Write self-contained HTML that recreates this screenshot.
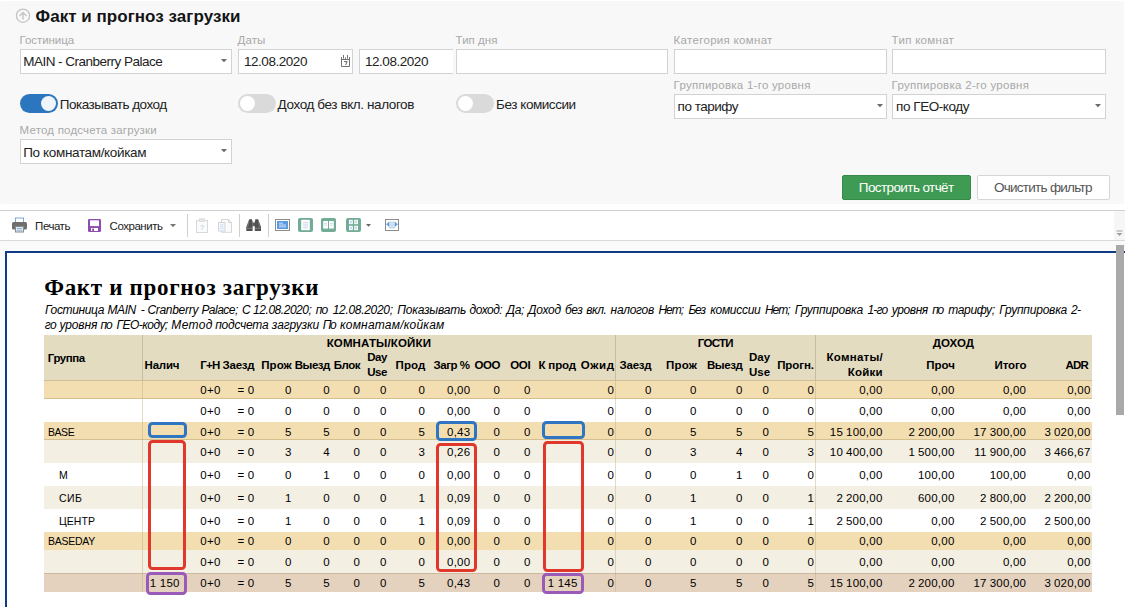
<!DOCTYPE html>
<html><head><meta charset="utf-8"><title>report</title>
<style>
html,body{margin:0;padding:0;}
body{width:1125px;height:607px;position:relative;overflow:hidden;background:#fff;font-family:'Liberation Sans',sans-serif;}
div,span,svg{position:absolute;}
</style></head><body>
<div style="position:absolute;left:0px;top:1px;width:1124px;height:203px;background:#f8f8f8;border-radius:2px;"></div>
<svg style="left:15px;top:8px" width="16" height="16" viewBox="0 0 16 16"><circle cx="8" cy="7.7" r="6.6" fill="none" stroke="#c4c4c4" stroke-width="1.3"/><path d="M8 11.4V4.9M4.5 8L8 4.5l3.5 3.5" fill="none" stroke="#c4c4c4" stroke-width="1.4"/></svg>
<div style="position:absolute;left:20px;top:49px;width:212px;height:25px;background:#fff;border:1px solid #d2d2d2;box-sizing:border-box;"></div>
<svg style="left:221.3px;top:59.099999999999994px" width="6" height="3.4" viewBox="0 0 6 3.4"><path d="M0 0H6L3.0 3.4Z" fill="#6b6b6b"/></svg>
<div style="position:absolute;left:238px;top:49px;width:115px;height:25px;background:#fff;border:1px solid #d2d2d2;box-sizing:border-box;"></div>
<div style="position:absolute;left:359px;top:49px;width:94px;height:25px;background:#fff;border:1px solid #d2d2d2;box-sizing:border-box;border-right:none;"></div>
<div style="position:absolute;left:456px;top:49px;width:212px;height:25px;background:#fff;border:1px solid #d2d2d2;box-sizing:border-box;"></div>
<div style="position:absolute;left:674px;top:49px;width:213px;height:25px;background:#fff;border:1px solid #d2d2d2;box-sizing:border-box;"></div>
<div style="position:absolute;left:892px;top:49px;width:213.5px;height:25px;background:#fff;border:1px solid #d2d2d2;box-sizing:border-box;"></div>
<div style="position:absolute;left:674px;top:94px;width:213px;height:25px;background:#fff;border:1px solid #d2d2d2;box-sizing:border-box;"></div>
<svg style="left:876.5px;top:104.1px" width="6" height="3.4" viewBox="0 0 6 3.4"><path d="M0 0H6L3.0 3.4Z" fill="#6b6b6b"/></svg>
<div style="position:absolute;left:892px;top:94px;width:213.5px;height:25px;background:#fff;border:1px solid #d2d2d2;box-sizing:border-box;"></div>
<svg style="left:1094.5px;top:104.1px" width="6" height="3.4" viewBox="0 0 6 3.4"><path d="M0 0H6L3.0 3.4Z" fill="#6b6b6b"/></svg>
<div style="position:absolute;left:20px;top:139px;width:212px;height:25px;background:#fff;border:1px solid #d2d2d2;box-sizing:border-box;"></div>
<svg style="left:221.3px;top:149.10000000000002px" width="6" height="3.4" viewBox="0 0 6 3.4"><path d="M0 0H6L3.0 3.4Z" fill="#6b6b6b"/></svg>
<svg style="left:341px;top:54px" width="9" height="13" viewBox="0 0 9 13"><path d="M0.5 3V12.5H8.5V3" fill="#fff" stroke="#707070" stroke-width="1"/><path d="M0.5 5.5h8" stroke="#707070" stroke-width="1"/><path d="M2.5 1v3.6M6.5 1v3.6M4.5 3.4v1.6" stroke="#707070" stroke-width="1"/><path d="M3 7.6h3.2L4.6 11" fill="none" stroke="#666" stroke-width="1"/></svg>
<div style="position:absolute;left:20px;top:94px;width:38px;height:19px;background:#2b76bf;border-radius:9.5px;"></div>
<div style="position:absolute;left:40.9px;top:95.9px;width:15.2px;height:15.2px;background:#f0f5fb;border-radius:7.6px;"></div>
<div style="position:absolute;left:238px;top:94px;width:38px;height:19px;background:#dadada;border-radius:9.5px;"></div>
<div style="position:absolute;left:239.7px;top:95.9px;width:15.2px;height:15.2px;background:#fff;border-radius:7.6px;"></div>
<div style="position:absolute;left:456px;top:94px;width:38px;height:19px;background:#dadada;border-radius:9.5px;"></div>
<div style="position:absolute;left:457.7px;top:95.9px;width:15.2px;height:15.2px;background:#fff;border-radius:7.6px;"></div>
<div style="position:absolute;left:842px;top:175px;width:129px;height:25px;background:#3f9a53;border:1px solid #37894a;box-sizing:border-box;border-radius:2px;"></div>
<div style="position:absolute;left:977px;top:175px;width:133px;height:25px;background:#fff;border:1px solid #d6d6d6;box-sizing:border-box;border-radius:2px;"></div>
<div style="position:absolute;left:0px;top:210px;width:1125px;height:1px;background:#d0d0d0;"></div>
<div style="position:absolute;left:0px;top:240px;width:1125px;height:1px;background:#d9d9d9;"></div>
<div style="position:absolute;left:1114px;top:211px;width:11px;height:29px;background:#f6f6f6;"></div>
<svg style="left:1116px;top:230px" width="7" height="7" viewBox="0 0 7 7"><path d="M0.5 1h6" stroke="#9aa0aa" stroke-width="1"/><path d="M0.5 3h6L3.5 6Z" fill="#9aa0aa"/></svg>
<div style="position:absolute;left:187px;top:214px;width:1px;height:23px;background:#cfcfcf;"></div>
<div style="position:absolute;left:239px;top:214px;width:1px;height:23px;background:#cfcfcf;"></div>
<div style="position:absolute;left:268px;top:214px;width:1px;height:23px;background:#cfcfcf;"></div>
<svg style="left:169.8px;top:224.0px" width="6" height="3.2" viewBox="0 0 6 3.2"><path d="M0 0H6L3.0 3.2Z" fill="#777"/></svg>
<svg style="left:366.0px;top:224.0px" width="5" height="2.8" viewBox="0 0 5 2.8"><path d="M0 0H5L2.5 2.8Z" fill="#666"/></svg>
<svg style="left:11px;top:217px" width="17" height="16" viewBox="0 0 17 16">
<rect x="4.5" y="1" width="8" height="5" fill="#fff" stroke="#7aa7d6" stroke-width="1"/>
<rect x="1" y="5" width="15" height="7.5" rx="1.5" fill="#6e6e6e"/>
<rect x="4.5" y="9.5" width="8" height="5.5" fill="#dfe9f5" stroke="#8a8a8a" stroke-width="1"/>
<path d="M6 11.5h5M6 13.3h5" stroke="#7aa7d6" stroke-width="0.8"/>
</svg>
<svg style="left:88px;top:219px" width="13" height="13" viewBox="0 0 13 13">
<rect x="0" y="0" width="13" height="13" rx="1.3" fill="#8e4bb0"/>
<rect x="2" y="1.3" width="9" height="5.8" fill="#fff"/>
<rect x="3" y="9" width="7" height="3" fill="#fff"/>
<rect x="4.2" y="9.6" width="1.8" height="2.4" fill="#8e4bb0"/>
</svg>
<svg style="left:196px;top:218px" width="12" height="15" viewBox="0 0 12 15">
<rect x="0.5" y="2.5" width="11" height="12" fill="#fbfbfb" stroke="#d9d9d9" stroke-width="1"/>
<rect x="3.5" y="0.8" width="5" height="2.6" fill="#e6e6e6" stroke="#d4d4d4" stroke-width="0.6"/>
<text x="6" y="12" font-size="8" font-family="Liberation Sans" fill="#c9dcf0" text-anchor="middle" font-weight="bold">?</text>
</svg>
<svg style="left:218px;top:219px" width="14" height="14" viewBox="0 0 14 14">
<path d="M3.5 0.5h7l3 3v9.8h-10z" fill="#fbfbfb" stroke="#d6d6d6" stroke-width="1"/>
<path d="M10.5 0.5v3h3" fill="none" stroke="#d6d6d6" stroke-width="1"/>
<rect x="0.5" y="3.5" width="6.5" height="8.5" fill="#f4f7fb" stroke="#d0d6de" stroke-width="1"/>
<path d="M2 5.8h3.5M2 7.6h3.5M2 9.4h3.5" stroke="#c9dcf0" stroke-width="0.8"/>
</svg>
<svg style="left:245.6px;top:218.5px" width="15.4" height="12.6" viewBox="0 0 16 13">
<path d="M3.4 0.3h2.8l0.7 2.4v9a0.8 0.8 0 0 1-0.8 0.8H1.2a0.9 0.9 0 0 1-0.9-0.9V8.2z" fill="#505050"/>
<path d="M12.6 0.3H9.8l-0.7 2.4v9a0.8 0.8 0 0 0 0.8 0.8h4.9a0.9 0.9 0 0 0 0.9-0.9V8.2z" fill="#505050"/>
<rect x="6.6" y="3.6" width="2.8" height="3.8" fill="#5c5c5c"/>
<path d="M3.2 2.6l-1.6 6M12.8 2.6l1.6 6" stroke="#8d8d8d" stroke-width="0.7" fill="none"/>
<path d="M0.8 9.6h5.8M9.4 9.6h5.8" stroke="#9a9a9a" stroke-width="0.7"/>
</svg>
<svg style="left:275px;top:219px" width="15" height="12" viewBox="0 0 15 12">
<rect x="0.5" y="0.5" width="14" height="11" fill="#fff" stroke="#8c8c8c" stroke-width="1"/>
<rect x="2" y="2" width="11" height="8" fill="#5b9be0"/>
<path d="M4 4.2h4M4 6h7M4 7.8h7" stroke="#cfe2f7" stroke-width="1"/>
</svg>
<svg style="left:298px;top:218px" width="15" height="14" viewBox="0 0 15 14">
<rect x="0" y="0" width="15" height="14" rx="2" fill="#72ab96"/>
<rect x="3.2" y="1.8" width="8.6" height="10.4" fill="#fff"/>
<path d="M5 4.4h5M5 6.2h5M5 8h5M5 9.8h5" stroke="#c6d6ea" stroke-width="0.9"/>
</svg>
<svg style="left:321px;top:218px" width="15" height="14" viewBox="0 0 15 14">
<rect x="0" y="0" width="15" height="14" rx="2" fill="#72ab96"/>
<rect x="2.2" y="3" width="4.8" height="7.6" fill="#fff"/>
<rect x="8" y="3" width="4.8" height="7.6" fill="#fff"/>
<path d="M3.2 5.4h2.8M3.2 7.2h2.8M9 5.4h2.8M9 7.2h2.8" stroke="#c6d6ea" stroke-width="0.9"/>
</svg>
<svg style="left:346px;top:218px" width="15" height="14" viewBox="0 0 15 14">
<rect x="0" y="0" width="15" height="14" rx="2" fill="#72ab96"/>
<rect x="3" y="1.8" width="3.8" height="4.4" fill="#fff"/>
<rect x="8.2" y="1.8" width="3.8" height="4.4" fill="#fff"/>
<rect x="3" y="7.8" width="3.8" height="4.4" fill="#fff"/>
<rect x="8.2" y="7.8" width="3.8" height="4.4" fill="#fff"/>
<path d="M3.8 3.4h2.2M9 3.4h2.2M3.8 4.8h2.2M9 4.8h2.2M3.8 9.4h2.2M9 9.4h2.2M3.8 10.8h2.2M9 10.8h2.2" stroke="#a9c6e8" stroke-width="0.8"/>
</svg>
<svg style="left:385px;top:219px" width="14" height="12" viewBox="0 0 14 12">
<rect x="0.5" y="0.5" width="13" height="11" fill="#fff" stroke="#8c8c8c" stroke-width="1"/>
<rect x="3.6" y="2.2" width="6.8" height="7.8" fill="#e3ebf5"/>
<path d="M3.8 3.6h6.4M3.8 5.2h6.4M3.8 6.8h6.4M3.8 8.4h6.4" stroke="#bccfe6" stroke-width="0.8"/>
<path d="M1.1 5.2l3-2.5v5z" fill="#5b9be0"/>
<path d="M12.9 5.2l-3-2.5v5z" fill="#5b9be0"/>
</svg>
<div style="position:absolute;left:0px;top:241px;width:1125px;height:10px;background:#fafafa;"></div>
<div style="position:absolute;left:0px;top:251px;width:5px;height:356px;background:#fafafa;"></div>
<div style="position:absolute;left:5px;top:251px;width:1120px;height:2px;background:#0e3b84;"></div>
<div style="position:absolute;left:5px;top:251px;width:2px;height:356px;background:#0e3b84;"></div>
<div style="position:absolute;left:1116px;top:245px;width:8px;height:170px;background:#a9a9a9;"></div>
<div style="position:absolute;left:43.8px;top:335px;width:1048.5px;height:45px;background:#e3dcc1;"></div>
<div style="position:absolute;left:43.8px;top:379.5px;width:1048.5px;height:1px;background:#cdbf98;"></div>
<div style="position:absolute;left:43.8px;top:380.5px;width:1048.5px;height:18.899999999999977px;background:#f3deb2;"></div>
<div style="position:absolute;left:43.8px;top:398.4px;width:1048.5px;height:1px;background:#d6bf8f;"></div>
<div style="position:absolute;left:43.8px;top:399.4px;width:1048.5px;height:22.600000000000023px;background:#ffffff;"></div>
<div style="position:absolute;left:43.8px;top:422px;width:1048.5px;height:18.399999999999977px;background:#f3deb2;"></div>
<div style="position:absolute;left:43.8px;top:439.4px;width:1048.5px;height:1px;background:#d6bf8f;"></div>
<div style="position:absolute;left:43.8px;top:440.4px;width:1048.5px;height:22.30000000000001px;background:#f3efe2;"></div>
<div style="position:absolute;left:43.8px;top:462.7px;width:1048.5px;height:23.30000000000001px;background:#ffffff;"></div>
<div style="position:absolute;left:43.8px;top:486px;width:1048.5px;height:22.899999999999977px;background:#f3efe2;"></div>
<div style="position:absolute;left:43.8px;top:508.9px;width:1048.5px;height:23.100000000000023px;background:#ffffff;"></div>
<div style="position:absolute;left:43.8px;top:532px;width:1048.5px;height:17.700000000000045px;background:#f3deb2;"></div>
<div style="position:absolute;left:43.8px;top:549.7px;width:1048.5px;height:23.59999999999991px;background:#f3efe2;"></div>
<div style="position:absolute;left:43.8px;top:573.3px;width:1048.5px;height:18.5px;background:#e5d2be;"></div>
<div style="position:absolute;left:43.8px;top:573.3px;width:1048.5px;height:1px;background:#cdb79f;"></div>
<div style="position:absolute;left:142px;top:335px;width:1px;height:45px;background:#c9bc98;"></div>
<div style="position:absolute;left:142px;top:380.5px;width:1px;height:211.5px;background:rgba(190,170,120,0.42);"></div>
<div style="position:absolute;left:615px;top:335px;width:1px;height:45px;background:#c9bc98;"></div>
<div style="position:absolute;left:615px;top:380.5px;width:1px;height:211.5px;background:rgba(190,170,120,0.42);"></div>
<div style="position:absolute;left:815px;top:335px;width:1px;height:45px;background:#c9bc98;"></div>
<div style="position:absolute;left:815px;top:380.5px;width:1px;height:211.5px;background:rgba(190,170,120,0.42);"></div>
<div style="position:absolute;left:148px;top:422px;width:39px;height:16px;border:3px solid #2f75c1;box-sizing:border-box;border-radius:4.5px;"></div>
<div style="position:absolute;left:436px;top:421px;width:41px;height:19.69999999999999px;border:3px solid #2f75c1;box-sizing:border-box;border-radius:4.5px;"></div>
<div style="position:absolute;left:542px;top:421px;width:43px;height:18px;border:3px solid #2f75c1;box-sizing:border-box;border-radius:4.5px;"></div>
<div style="position:absolute;left:148px;top:440px;width:38px;height:130px;border:3px solid #e0382d;box-sizing:border-box;border-radius:4.5px;"></div>
<div style="position:absolute;left:436px;top:443px;width:41px;height:129.39999999999998px;border:3px solid #e0382d;box-sizing:border-box;border-radius:4.5px;"></div>
<div style="position:absolute;left:543px;top:441px;width:41px;height:131.39999999999998px;border:3px solid #e0382d;box-sizing:border-box;border-radius:4.5px;"></div>
<div style="position:absolute;left:146px;top:572px;width:41px;height:23px;border:3px solid #9a5ab8;box-sizing:border-box;border-radius:4.5px;"></div>
<div style="position:absolute;left:541.7px;top:573.2px;width:42.5px;height:20.59999999999991px;border:3px solid #9a5ab8;box-sizing:border-box;border-radius:4.5px;"></div>
<span style="position:absolute;white-space:pre;left:35.60px;top:5.51px;line-height:22px;color:#141414;font-family:'Liberation Sans',sans-serif;font-size:17px;font-weight:bold;font-style:normal;letter-spacing:0.037px;">Факт и прогноз загрузки</span>
<span style="position:absolute;white-space:pre;left:19.60px;top:32.82px;line-height:15px;color:#a8a8a8;font-family:'Liberation Sans',sans-serif;font-size:11.5px;font-weight:normal;font-style:normal;letter-spacing:-0.070px;">Гостиница</span>
<span style="position:absolute;white-space:pre;left:237.60px;top:32.82px;line-height:15px;color:#a8a8a8;font-family:'Liberation Sans',sans-serif;font-size:11.5px;font-weight:normal;font-style:normal;letter-spacing:0.077px;">Даты</span>
<span style="position:absolute;white-space:pre;left:455.60px;top:32.82px;line-height:15px;color:#a8a8a8;font-family:'Liberation Sans',sans-serif;font-size:11.5px;font-weight:normal;font-style:normal;letter-spacing:0.024px;">Тип дня</span>
<span style="position:absolute;white-space:pre;left:673.60px;top:32.82px;line-height:15px;color:#a8a8a8;font-family:'Liberation Sans',sans-serif;font-size:11.5px;font-weight:normal;font-style:normal;letter-spacing:0.307px;">Категория комнат</span>
<span style="position:absolute;white-space:pre;left:891.60px;top:32.82px;line-height:15px;color:#a8a8a8;font-family:'Liberation Sans',sans-serif;font-size:11.5px;font-weight:normal;font-style:normal;letter-spacing:0.301px;">Тип комнат</span>
<span style="position:absolute;white-space:pre;left:673.60px;top:77.62px;line-height:15px;color:#a8a8a8;font-family:'Liberation Sans',sans-serif;font-size:11.5px;font-weight:normal;font-style:normal;letter-spacing:0.258px;">Группировка 1-го уровня</span>
<span style="position:absolute;white-space:pre;left:891.60px;top:77.62px;line-height:15px;color:#a8a8a8;font-family:'Liberation Sans',sans-serif;font-size:11.5px;font-weight:normal;font-style:normal;letter-spacing:0.281px;">Группировка 2-го уровня</span>
<span style="position:absolute;white-space:pre;left:19.60px;top:122.92px;line-height:15px;color:#a8a8a8;font-family:'Liberation Sans',sans-serif;font-size:11.5px;font-weight:normal;font-style:normal;letter-spacing:0.188px;">Метод подсчета загрузки</span>
<span style="position:absolute;white-space:pre;left:23.20px;top:53.02px;line-height:18px;color:#222;font-family:'Liberation Sans',sans-serif;font-size:13.5px;font-weight:normal;font-style:normal;letter-spacing:-0.513px;">MAIN - Cranberry Palace</span>
<span style="position:absolute;white-space:pre;left:244.00px;top:53.02px;line-height:18px;color:#222;font-family:'Liberation Sans',sans-serif;font-size:13.5px;font-weight:normal;font-style:normal;letter-spacing:-0.464px;">12.08.2020</span>
<span style="position:absolute;white-space:pre;left:365.00px;top:53.02px;line-height:18px;color:#222;font-family:'Liberation Sans',sans-serif;font-size:13.5px;font-weight:normal;font-style:normal;letter-spacing:-0.464px;">12.08.2020</span>
<span style="position:absolute;white-space:pre;left:677.60px;top:98.02px;line-height:18px;color:#222;font-family:'Liberation Sans',sans-serif;font-size:13.5px;font-weight:normal;font-style:normal;letter-spacing:-0.509px;">по тарифу</span>
<span style="position:absolute;white-space:pre;left:896.10px;top:98.02px;line-height:18px;color:#222;font-family:'Liberation Sans',sans-serif;font-size:13.5px;font-weight:normal;font-style:normal;letter-spacing:-0.448px;">по ГЕО-коду</span>
<span style="position:absolute;white-space:pre;left:23.20px;top:144.02px;line-height:18px;color:#222;font-family:'Liberation Sans',sans-serif;font-size:13.5px;font-weight:normal;font-style:normal;letter-spacing:-0.344px;">По комнатам/койкам</span>
<span style="position:absolute;white-space:pre;left:59.80px;top:95.92px;line-height:18px;color:#222;font-family:'Liberation Sans',sans-serif;font-size:13.5px;font-weight:normal;font-style:normal;letter-spacing:-0.500px;">Показывать доход</span>
<span style="position:absolute;white-space:pre;left:277.60px;top:95.92px;line-height:18px;color:#222;font-family:'Liberation Sans',sans-serif;font-size:13.5px;font-weight:normal;font-style:normal;letter-spacing:-0.402px;">Доход без вкл. налогов</span>
<span style="position:absolute;white-space:pre;left:496.10px;top:95.92px;line-height:18px;color:#222;font-family:'Liberation Sans',sans-serif;font-size:13.5px;font-weight:normal;font-style:normal;letter-spacing:-0.453px;">Без комиссии</span>
<span style="position:absolute;white-space:pre;left:858.80px;top:178.72px;line-height:18px;color:#fff;font-family:'Liberation Sans',sans-serif;font-size:13.5px;font-weight:normal;font-style:normal;letter-spacing:-0.600px;">Построить отчёт</span>
<span style="position:absolute;white-space:pre;left:993.90px;top:178.72px;line-height:18px;color:#555;font-family:'Liberation Sans',sans-serif;font-size:13.5px;font-weight:normal;font-style:normal;letter-spacing:-0.723px;">Очистить фильтр</span>
<span style="position:absolute;white-space:pre;left:35.10px;top:218.52px;line-height:15px;color:#222;font-family:'Liberation Sans',sans-serif;font-size:11.5px;font-weight:normal;font-style:normal;letter-spacing:-0.478px;">Печать</span>
<span style="position:absolute;white-space:pre;left:109.60px;top:218.52px;line-height:15px;color:#222;font-family:'Liberation Sans',sans-serif;font-size:11.5px;font-weight:normal;font-style:normal;letter-spacing:-0.470px;">Сохранить</span>
<span style="position:absolute;white-space:pre;left:44.20px;top:273.14px;line-height:30px;color:#000;font-family:'Liberation Serif',serif;font-size:23px;font-weight:bold;font-style:normal;letter-spacing:0.686px;">Факт и прогноз загрузки</span>
<span style="position:absolute;white-space:pre;left:45.10px;top:301.84px;line-height:16px;color:#000;font-family:'Liberation Sans',sans-serif;font-size:12px;font-weight:normal;font-style:italic;letter-spacing:-0.357px;">Гостиница</span>
<span style="position:absolute;white-space:pre;left:107.50px;top:301.84px;line-height:16px;color:#000;font-family:'Liberation Sans',sans-serif;font-size:12px;font-weight:normal;font-style:italic;letter-spacing:-0.433px;">MAIN</span>
<span style="position:absolute;white-space:pre;left:140.80px;top:301.84px;line-height:16px;color:#000;font-family:'Liberation Sans',sans-serif;font-size:12px;font-weight:normal;font-style:italic;">-</span>
<span style="position:absolute;white-space:pre;left:147.40px;top:301.84px;line-height:16px;color:#000;font-family:'Liberation Sans',sans-serif;font-size:12px;font-weight:normal;font-style:italic;letter-spacing:-0.295px;">Cranberry</span>
<span style="position:absolute;white-space:pre;left:201.40px;top:301.84px;line-height:16px;color:#000;font-family:'Liberation Sans',sans-serif;font-size:12px;font-weight:normal;font-style:italic;letter-spacing:-0.522px;">Palace;</span>
<span style="position:absolute;white-space:pre;left:241.90px;top:301.84px;line-height:16px;color:#000;font-family:'Liberation Sans',sans-serif;font-size:12px;font-weight:normal;font-style:italic;">С</span>
<span style="position:absolute;white-space:pre;left:253.10px;top:301.84px;line-height:16px;color:#000;font-family:'Liberation Sans',sans-serif;font-size:12px;font-weight:normal;font-style:italic;letter-spacing:-0.461px;">12.08.2020;</span>
<span style="position:absolute;white-space:pre;left:315.80px;top:301.84px;line-height:16px;color:#000;font-family:'Liberation Sans',sans-serif;font-size:12px;font-weight:normal;font-style:italic;letter-spacing:-0.781px;">по</span>
<span style="position:absolute;white-space:pre;left:332.70px;top:301.84px;line-height:16px;color:#000;font-family:'Liberation Sans',sans-serif;font-size:12px;font-weight:normal;font-style:italic;letter-spacing:-0.311px;">12.08.2020;</span>
<span style="position:absolute;white-space:pre;left:397.20px;top:301.84px;line-height:16px;color:#000;font-family:'Liberation Sans',sans-serif;font-size:12px;font-weight:normal;font-style:italic;letter-spacing:-0.183px;">Показывать</span>
<span style="position:absolute;white-space:pre;left:469.60px;top:301.84px;line-height:16px;color:#000;font-family:'Liberation Sans',sans-serif;font-size:12px;font-weight:normal;font-style:italic;letter-spacing:-0.492px;">доход:</span>
<span style="position:absolute;white-space:pre;left:506.60px;top:301.84px;line-height:16px;color:#000;font-family:'Liberation Sans',sans-serif;font-size:12px;font-weight:normal;font-style:italic;letter-spacing:-0.334px;">Да;</span>
<span style="position:absolute;white-space:pre;left:528.10px;top:301.84px;line-height:16px;color:#000;font-family:'Liberation Sans',sans-serif;font-size:12px;font-weight:normal;font-style:italic;letter-spacing:-0.233px;">Доход</span>
<span style="position:absolute;white-space:pre;left:565.10px;top:301.84px;line-height:16px;color:#000;font-family:'Liberation Sans',sans-serif;font-size:12px;font-weight:normal;font-style:italic;letter-spacing:-0.588px;">без</span>
<span style="position:absolute;white-space:pre;left:586.20px;top:301.84px;line-height:16px;color:#000;font-family:'Liberation Sans',sans-serif;font-size:12px;font-weight:normal;font-style:italic;letter-spacing:-0.444px;">вкл.</span>
<span style="position:absolute;white-space:pre;left:610.60px;top:301.84px;line-height:16px;color:#000;font-family:'Liberation Sans',sans-serif;font-size:12px;font-weight:normal;font-style:italic;letter-spacing:-0.285px;">налогов</span>
<span style="position:absolute;white-space:pre;left:658.40px;top:301.84px;line-height:16px;color:#000;font-family:'Liberation Sans',sans-serif;font-size:12px;font-weight:normal;font-style:italic;letter-spacing:-0.949px;">Нет;</span>
<span style="position:absolute;white-space:pre;left:688.50px;top:301.84px;line-height:16px;color:#000;font-family:'Liberation Sans',sans-serif;font-size:12px;font-weight:normal;font-style:italic;letter-spacing:-1.219px;">Без</span>
<span style="position:absolute;white-space:pre;left:710.20px;top:301.84px;line-height:16px;color:#000;font-family:'Liberation Sans',sans-serif;font-size:12px;font-weight:normal;font-style:italic;letter-spacing:-0.299px;">комиссии</span>
<span style="position:absolute;white-space:pre;left:764.90px;top:301.84px;line-height:16px;color:#000;font-family:'Liberation Sans',sans-serif;font-size:12px;font-weight:normal;font-style:italic;letter-spacing:-0.949px;">Нет;</span>
<span style="position:absolute;white-space:pre;left:794.80px;top:301.84px;line-height:16px;color:#000;font-family:'Liberation Sans',sans-serif;font-size:12px;font-weight:normal;font-style:italic;letter-spacing:-0.171px;">Группировка</span>
<span style="position:absolute;white-space:pre;left:867.40px;top:301.84px;line-height:16px;color:#000;font-family:'Liberation Sans',sans-serif;font-size:12px;font-weight:normal;font-style:italic;letter-spacing:-0.814px;">1-го</span>
<span style="position:absolute;white-space:pre;left:891.80px;top:301.84px;line-height:16px;color:#000;font-family:'Liberation Sans',sans-serif;font-size:12px;font-weight:normal;font-style:italic;letter-spacing:-0.445px;">уровня</span>
<span style="position:absolute;white-space:pre;left:932.30px;top:301.84px;line-height:16px;color:#000;font-family:'Liberation Sans',sans-serif;font-size:12px;font-weight:normal;font-style:italic;letter-spacing:-1.481px;">по</span>
<span style="position:absolute;white-space:pre;left:948.30px;top:301.84px;line-height:16px;color:#000;font-family:'Liberation Sans',sans-serif;font-size:12px;font-weight:normal;font-style:italic;letter-spacing:-0.364px;">тарифу;</span>
<span style="position:absolute;white-space:pre;left:999.30px;top:301.84px;line-height:16px;color:#000;font-family:'Liberation Sans',sans-serif;font-size:12px;font-weight:normal;font-style:italic;letter-spacing:-0.211px;">Группировка</span>
<span style="position:absolute;white-space:pre;left:1071.00px;top:301.84px;line-height:16px;color:#000;font-family:'Liberation Sans',sans-serif;font-size:12px;font-weight:normal;font-style:italic;letter-spacing:-0.672px;">2-</span>
<span style="position:absolute;white-space:pre;left:44.80px;top:317.04px;line-height:16px;color:#000;font-family:'Liberation Sans',sans-serif;font-size:12px;font-weight:normal;font-style:italic;letter-spacing:-0.669px;">го</span>
<span style="position:absolute;white-space:pre;left:59.50px;top:317.04px;line-height:16px;color:#000;font-family:'Liberation Sans',sans-serif;font-size:12px;font-weight:normal;font-style:italic;letter-spacing:-0.165px;">уровня</span>
<span style="position:absolute;white-space:pre;left:100.60px;top:317.04px;line-height:16px;color:#000;font-family:'Liberation Sans',sans-serif;font-size:12px;font-weight:normal;font-style:italic;letter-spacing:-1.281px;">по</span>
<span style="position:absolute;white-space:pre;left:116.50px;top:317.04px;line-height:16px;color:#000;font-family:'Liberation Sans',sans-serif;font-size:12px;font-weight:normal;font-style:italic;letter-spacing:-0.543px;">ГЕО-коду;</span>
<span style="position:absolute;white-space:pre;left:171.30px;top:317.04px;line-height:16px;color:#000;font-family:'Liberation Sans',sans-serif;font-size:12px;font-weight:normal;font-style:italic;letter-spacing:0.349px;">Метод</span>
<span style="position:absolute;white-space:pre;left:215.20px;top:317.04px;line-height:16px;color:#000;font-family:'Liberation Sans',sans-serif;font-size:12px;font-weight:normal;font-style:italic;letter-spacing:-0.200px;">подсчета</span>
<span style="position:absolute;white-space:pre;left:271.80px;top:317.04px;line-height:16px;color:#000;font-family:'Liberation Sans',sans-serif;font-size:12px;font-weight:normal;font-style:italic;letter-spacing:-0.105px;">загрузки</span>
<span style="position:absolute;white-space:pre;left:322.80px;top:317.04px;line-height:16px;color:#000;font-family:'Liberation Sans',sans-serif;font-size:12px;font-weight:normal;font-style:italic;letter-spacing:-1.475px;">По</span>
<span style="position:absolute;white-space:pre;left:339.90px;top:317.04px;line-height:16px;color:#000;font-family:'Liberation Sans',sans-serif;font-size:12px;font-weight:normal;font-style:italic;letter-spacing:0.205px;">комнатам/койкам</span>
<span style="position:absolute;white-space:pre;left:47.80px;top:350.92px;line-height:15px;color:#000;font-family:'Liberation Sans',sans-serif;font-size:11.5px;font-weight:bold;font-style:normal;letter-spacing:-0.448px;">Группа</span>
<span style="position:absolute;white-space:pre;left:326.65px;top:335.52px;line-height:15px;color:#000;font-family:'Liberation Sans',sans-serif;font-size:11.5px;font-weight:bold;font-style:normal;letter-spacing:0.143px;">КОМНАТЫ/КОЙКИ</span>
<span style="position:absolute;white-space:pre;left:697.85px;top:335.52px;line-height:15px;color:#000;font-family:'Liberation Sans',sans-serif;font-size:11.5px;font-weight:bold;font-style:normal;letter-spacing:-0.731px;">ГОСТИ</span>
<span style="position:absolute;white-space:pre;left:932.85px;top:335.52px;line-height:15px;color:#000;font-family:'Liberation Sans',sans-serif;font-size:11.5px;font-weight:bold;font-style:normal;letter-spacing:0.009px;">ДОХОД</span>
<span style="position:absolute;white-space:pre;left:144.60px;top:357.62px;line-height:15px;color:#000;font-family:'Liberation Sans',sans-serif;font-size:11.5px;font-weight:bold;font-style:normal;letter-spacing:-0.241px;">Налич</span>
<span style="position:absolute;white-space:pre;left:200.20px;top:357.62px;line-height:15px;color:#000;font-family:'Liberation Sans',sans-serif;font-size:11.5px;font-weight:bold;font-style:normal;letter-spacing:-0.673px;">Г+Н</span>
<span style="position:absolute;white-space:pre;left:222.60px;top:357.62px;line-height:15px;color:#000;font-family:'Liberation Sans',sans-serif;font-size:11.5px;font-weight:bold;font-style:normal;letter-spacing:-0.279px;">Заезд</span>
<span style="position:absolute;white-space:pre;left:261.20px;top:357.62px;line-height:15px;color:#000;font-family:'Liberation Sans',sans-serif;font-size:11.5px;font-weight:bold;font-style:normal;letter-spacing:0.091px;">Прож</span>
<span style="position:absolute;white-space:pre;left:294.70px;top:357.62px;line-height:15px;color:#000;font-family:'Liberation Sans',sans-serif;font-size:11.5px;font-weight:bold;font-style:normal;letter-spacing:-0.462px;">Выезд</span>
<span style="position:absolute;white-space:pre;left:333.80px;top:357.62px;line-height:15px;color:#000;font-family:'Liberation Sans',sans-serif;font-size:11.5px;font-weight:bold;font-style:normal;letter-spacing:-0.501px;">Блок</span>
<span style="position:absolute;white-space:pre;left:395.60px;top:357.62px;line-height:15px;color:#000;font-family:'Liberation Sans',sans-serif;font-size:11.5px;font-weight:bold;font-style:normal;letter-spacing:0.077px;">Прод</span>
<span style="position:absolute;white-space:pre;left:433.50px;top:357.62px;line-height:15px;color:#000;font-family:'Liberation Sans',sans-serif;font-size:11.5px;font-weight:bold;font-style:normal;letter-spacing:-0.469px;">Загр %</span>
<span style="position:absolute;white-space:pre;left:474.50px;top:357.62px;line-height:15px;color:#000;font-family:'Liberation Sans',sans-serif;font-size:11.5px;font-weight:bold;font-style:normal;letter-spacing:-0.422px;">ООО</span>
<span style="position:absolute;white-space:pre;left:510.20px;top:357.62px;line-height:15px;color:#000;font-family:'Liberation Sans',sans-serif;font-size:11.5px;font-weight:bold;font-style:normal;letter-spacing:-0.347px;">OOI</span>
<span style="position:absolute;white-space:pre;left:538.50px;top:357.62px;line-height:15px;color:#000;font-family:'Liberation Sans',sans-serif;font-size:11.5px;font-weight:bold;font-style:normal;letter-spacing:-0.172px;">К прод</span>
<span style="position:absolute;white-space:pre;left:580.80px;top:357.62px;line-height:15px;color:#000;font-family:'Liberation Sans',sans-serif;font-size:11.5px;font-weight:bold;font-style:normal;letter-spacing:0.577px;">Ожид</span>
<span style="position:absolute;white-space:pre;left:619.50px;top:357.62px;line-height:15px;color:#000;font-family:'Liberation Sans',sans-serif;font-size:11.5px;font-weight:bold;font-style:normal;letter-spacing:-0.229px;">Заезд</span>
<span style="position:absolute;white-space:pre;left:665.90px;top:357.62px;line-height:15px;color:#000;font-family:'Liberation Sans',sans-serif;font-size:11.5px;font-weight:bold;font-style:normal;letter-spacing:0.257px;">Прож</span>
<span style="position:absolute;white-space:pre;left:706.90px;top:357.62px;line-height:15px;color:#000;font-family:'Liberation Sans',sans-serif;font-size:11.5px;font-weight:bold;font-style:normal;letter-spacing:-0.387px;">Выезд</span>
<span style="position:absolute;white-space:pre;left:777.20px;top:357.62px;line-height:15px;color:#000;font-family:'Liberation Sans',sans-serif;font-size:11.5px;font-weight:bold;font-style:normal;letter-spacing:-0.090px;">Прогн.</span>
<span style="position:absolute;white-space:pre;left:926.20px;top:357.62px;line-height:15px;color:#000;font-family:'Liberation Sans',sans-serif;font-size:11.5px;font-weight:bold;font-style:normal;letter-spacing:-0.006px;">Проч</span>
<span style="position:absolute;white-space:pre;left:994.60px;top:357.62px;line-height:15px;color:#000;font-family:'Liberation Sans',sans-serif;font-size:11.5px;font-weight:bold;font-style:normal;letter-spacing:-0.134px;">Итого</span>
<span style="position:absolute;white-space:pre;left:1065.60px;top:357.62px;line-height:15px;color:#000;font-family:'Liberation Sans',sans-serif;font-size:11.5px;font-weight:bold;font-style:normal;letter-spacing:-0.861px;">ADR</span>
<span style="position:absolute;white-space:pre;left:367.30px;top:349.62px;line-height:15px;color:#000;font-family:'Liberation Sans',sans-serif;font-size:11.5px;font-weight:bold;font-style:normal;letter-spacing:-0.555px;">Day</span>
<span style="position:absolute;white-space:pre;left:367.30px;top:365.42px;line-height:15px;color:#000;font-family:'Liberation Sans',sans-serif;font-size:11.5px;font-weight:bold;font-style:normal;letter-spacing:-0.555px;">Use</span>
<span style="position:absolute;white-space:pre;left:748.90px;top:349.62px;line-height:15px;color:#000;font-family:'Liberation Sans',sans-serif;font-size:11.5px;font-weight:bold;font-style:normal;letter-spacing:0.045px;">Day</span>
<span style="position:absolute;white-space:pre;left:748.90px;top:365.42px;line-height:15px;color:#000;font-family:'Liberation Sans',sans-serif;font-size:11.5px;font-weight:bold;font-style:normal;letter-spacing:0.045px;">Use</span>
<span style="position:absolute;white-space:pre;left:826.60px;top:349.62px;line-height:15px;color:#000;font-family:'Liberation Sans',sans-serif;font-size:11.5px;font-weight:bold;font-style:normal;letter-spacing:0.244px;">Комнаты/</span>
<span style="position:absolute;white-space:pre;left:847.80px;top:365.42px;line-height:15px;color:#000;font-family:'Liberation Sans',sans-serif;font-size:11.5px;font-weight:bold;font-style:normal;letter-spacing:0.237px;">Койки</span>
<span style="position:absolute;white-space:pre;left:200.34px;top:382.72px;line-height:15px;color:#000;font-family:'Liberation Sans',sans-serif;font-size:11.5px;font-weight:normal;font-style:normal;letter-spacing:0.220px;">0+0</span>
<span style="position:absolute;white-space:pre;left:237.45px;top:382.72px;line-height:15px;color:#000;font-family:'Liberation Sans',sans-serif;font-size:11.5px;font-weight:normal;font-style:normal;letter-spacing:0.220px;">= 0</span>
<span style="position:absolute;white-space:pre;left:285.09px;top:382.72px;line-height:15px;color:#000;font-family:'Liberation Sans',sans-serif;font-size:11.5px;font-weight:normal;font-style:normal;letter-spacing:0.220px;">0</span>
<span style="position:absolute;white-space:pre;left:323.19px;top:382.72px;line-height:15px;color:#000;font-family:'Liberation Sans',sans-serif;font-size:11.5px;font-weight:normal;font-style:normal;letter-spacing:0.220px;">0</span>
<span style="position:absolute;white-space:pre;left:353.59px;top:382.72px;line-height:15px;color:#000;font-family:'Liberation Sans',sans-serif;font-size:11.5px;font-weight:normal;font-style:normal;letter-spacing:0.220px;">0</span>
<span style="position:absolute;white-space:pre;left:379.99px;top:382.72px;line-height:15px;color:#000;font-family:'Liberation Sans',sans-serif;font-size:11.5px;font-weight:normal;font-style:normal;letter-spacing:0.220px;">0</span>
<span style="position:absolute;white-space:pre;left:418.39px;top:382.72px;line-height:15px;color:#000;font-family:'Liberation Sans',sans-serif;font-size:11.5px;font-weight:normal;font-style:normal;letter-spacing:0.220px;">0</span>
<span style="position:absolute;white-space:pre;left:447.05px;top:382.72px;line-height:15px;color:#000;font-family:'Liberation Sans',sans-serif;font-size:11.5px;font-weight:normal;font-style:normal;letter-spacing:0.220px;">0,00</span>
<span style="position:absolute;white-space:pre;left:493.59px;top:382.72px;line-height:15px;color:#000;font-family:'Liberation Sans',sans-serif;font-size:11.5px;font-weight:normal;font-style:normal;letter-spacing:0.220px;">0</span>
<span style="position:absolute;white-space:pre;left:524.09px;top:382.72px;line-height:15px;color:#000;font-family:'Liberation Sans',sans-serif;font-size:11.5px;font-weight:normal;font-style:normal;letter-spacing:0.220px;">0</span>
<span style="position:absolute;white-space:pre;left:607.49px;top:382.72px;line-height:15px;color:#000;font-family:'Liberation Sans',sans-serif;font-size:11.5px;font-weight:normal;font-style:normal;letter-spacing:0.220px;">0</span>
<span style="position:absolute;white-space:pre;left:645.09px;top:382.72px;line-height:15px;color:#000;font-family:'Liberation Sans',sans-serif;font-size:11.5px;font-weight:normal;font-style:normal;letter-spacing:0.220px;">0</span>
<span style="position:absolute;white-space:pre;left:689.89px;top:382.72px;line-height:15px;color:#000;font-family:'Liberation Sans',sans-serif;font-size:11.5px;font-weight:normal;font-style:normal;letter-spacing:0.220px;">0</span>
<span style="position:absolute;white-space:pre;left:735.99px;top:382.72px;line-height:15px;color:#000;font-family:'Liberation Sans',sans-serif;font-size:11.5px;font-weight:normal;font-style:normal;letter-spacing:0.220px;">0</span>
<span style="position:absolute;white-space:pre;left:762.59px;top:382.72px;line-height:15px;color:#000;font-family:'Liberation Sans',sans-serif;font-size:11.5px;font-weight:normal;font-style:normal;letter-spacing:0.220px;">0</span>
<span style="position:absolute;white-space:pre;left:807.59px;top:382.72px;line-height:15px;color:#000;font-family:'Liberation Sans',sans-serif;font-size:11.5px;font-weight:normal;font-style:normal;letter-spacing:0.220px;">0</span>
<span style="position:absolute;white-space:pre;left:859.25px;top:382.72px;line-height:15px;color:#000;font-family:'Liberation Sans',sans-serif;font-size:11.5px;font-weight:normal;font-style:normal;letter-spacing:0.220px;">0,00</span>
<span style="position:absolute;white-space:pre;left:931.25px;top:382.72px;line-height:15px;color:#000;font-family:'Liberation Sans',sans-serif;font-size:11.5px;font-weight:normal;font-style:normal;letter-spacing:0.220px;">0,00</span>
<span style="position:absolute;white-space:pre;left:1002.95px;top:382.72px;line-height:15px;color:#000;font-family:'Liberation Sans',sans-serif;font-size:11.5px;font-weight:normal;font-style:normal;letter-spacing:0.220px;">0,00</span>
<span style="position:absolute;white-space:pre;left:1067.25px;top:382.72px;line-height:15px;color:#000;font-family:'Liberation Sans',sans-serif;font-size:11.5px;font-weight:normal;font-style:normal;letter-spacing:0.220px;">0,00</span>
<span style="position:absolute;white-space:pre;left:200.34px;top:404.42px;line-height:15px;color:#000;font-family:'Liberation Sans',sans-serif;font-size:11.5px;font-weight:normal;font-style:normal;letter-spacing:0.220px;">0+0</span>
<span style="position:absolute;white-space:pre;left:237.45px;top:404.42px;line-height:15px;color:#000;font-family:'Liberation Sans',sans-serif;font-size:11.5px;font-weight:normal;font-style:normal;letter-spacing:0.220px;">= 0</span>
<span style="position:absolute;white-space:pre;left:285.09px;top:404.42px;line-height:15px;color:#000;font-family:'Liberation Sans',sans-serif;font-size:11.5px;font-weight:normal;font-style:normal;letter-spacing:0.220px;">0</span>
<span style="position:absolute;white-space:pre;left:323.19px;top:404.42px;line-height:15px;color:#000;font-family:'Liberation Sans',sans-serif;font-size:11.5px;font-weight:normal;font-style:normal;letter-spacing:0.220px;">0</span>
<span style="position:absolute;white-space:pre;left:353.59px;top:404.42px;line-height:15px;color:#000;font-family:'Liberation Sans',sans-serif;font-size:11.5px;font-weight:normal;font-style:normal;letter-spacing:0.220px;">0</span>
<span style="position:absolute;white-space:pre;left:379.99px;top:404.42px;line-height:15px;color:#000;font-family:'Liberation Sans',sans-serif;font-size:11.5px;font-weight:normal;font-style:normal;letter-spacing:0.220px;">0</span>
<span style="position:absolute;white-space:pre;left:418.39px;top:404.42px;line-height:15px;color:#000;font-family:'Liberation Sans',sans-serif;font-size:11.5px;font-weight:normal;font-style:normal;letter-spacing:0.220px;">0</span>
<span style="position:absolute;white-space:pre;left:447.05px;top:404.42px;line-height:15px;color:#000;font-family:'Liberation Sans',sans-serif;font-size:11.5px;font-weight:normal;font-style:normal;letter-spacing:0.220px;">0,00</span>
<span style="position:absolute;white-space:pre;left:493.59px;top:404.42px;line-height:15px;color:#000;font-family:'Liberation Sans',sans-serif;font-size:11.5px;font-weight:normal;font-style:normal;letter-spacing:0.220px;">0</span>
<span style="position:absolute;white-space:pre;left:524.09px;top:404.42px;line-height:15px;color:#000;font-family:'Liberation Sans',sans-serif;font-size:11.5px;font-weight:normal;font-style:normal;letter-spacing:0.220px;">0</span>
<span style="position:absolute;white-space:pre;left:607.49px;top:404.42px;line-height:15px;color:#000;font-family:'Liberation Sans',sans-serif;font-size:11.5px;font-weight:normal;font-style:normal;letter-spacing:0.220px;">0</span>
<span style="position:absolute;white-space:pre;left:645.09px;top:404.42px;line-height:15px;color:#000;font-family:'Liberation Sans',sans-serif;font-size:11.5px;font-weight:normal;font-style:normal;letter-spacing:0.220px;">0</span>
<span style="position:absolute;white-space:pre;left:689.89px;top:404.42px;line-height:15px;color:#000;font-family:'Liberation Sans',sans-serif;font-size:11.5px;font-weight:normal;font-style:normal;letter-spacing:0.220px;">0</span>
<span style="position:absolute;white-space:pre;left:735.99px;top:404.42px;line-height:15px;color:#000;font-family:'Liberation Sans',sans-serif;font-size:11.5px;font-weight:normal;font-style:normal;letter-spacing:0.220px;">0</span>
<span style="position:absolute;white-space:pre;left:762.59px;top:404.42px;line-height:15px;color:#000;font-family:'Liberation Sans',sans-serif;font-size:11.5px;font-weight:normal;font-style:normal;letter-spacing:0.220px;">0</span>
<span style="position:absolute;white-space:pre;left:807.59px;top:404.42px;line-height:15px;color:#000;font-family:'Liberation Sans',sans-serif;font-size:11.5px;font-weight:normal;font-style:normal;letter-spacing:0.220px;">0</span>
<span style="position:absolute;white-space:pre;left:859.25px;top:404.42px;line-height:15px;color:#000;font-family:'Liberation Sans',sans-serif;font-size:11.5px;font-weight:normal;font-style:normal;letter-spacing:0.220px;">0,00</span>
<span style="position:absolute;white-space:pre;left:931.25px;top:404.42px;line-height:15px;color:#000;font-family:'Liberation Sans',sans-serif;font-size:11.5px;font-weight:normal;font-style:normal;letter-spacing:0.220px;">0,00</span>
<span style="position:absolute;white-space:pre;left:1002.95px;top:404.42px;line-height:15px;color:#000;font-family:'Liberation Sans',sans-serif;font-size:11.5px;font-weight:normal;font-style:normal;letter-spacing:0.220px;">0,00</span>
<span style="position:absolute;white-space:pre;left:1067.25px;top:404.42px;line-height:15px;color:#000;font-family:'Liberation Sans',sans-serif;font-size:11.5px;font-weight:normal;font-style:normal;letter-spacing:0.220px;">0,00</span>
<span style="position:absolute;white-space:pre;left:47.90px;top:425.01px;line-height:14px;color:#000;font-family:'Liberation Sans',sans-serif;font-size:10.5px;font-weight:normal;font-style:normal;letter-spacing:-0.405px;">BASE</span>
<span style="position:absolute;white-space:pre;left:200.34px;top:424.62px;line-height:15px;color:#000;font-family:'Liberation Sans',sans-serif;font-size:11.5px;font-weight:normal;font-style:normal;letter-spacing:0.220px;">0+0</span>
<span style="position:absolute;white-space:pre;left:237.45px;top:424.62px;line-height:15px;color:#000;font-family:'Liberation Sans',sans-serif;font-size:11.5px;font-weight:normal;font-style:normal;letter-spacing:0.220px;">= 0</span>
<span style="position:absolute;white-space:pre;left:285.09px;top:424.62px;line-height:15px;color:#000;font-family:'Liberation Sans',sans-serif;font-size:11.5px;font-weight:normal;font-style:normal;letter-spacing:0.220px;">5</span>
<span style="position:absolute;white-space:pre;left:323.19px;top:424.62px;line-height:15px;color:#000;font-family:'Liberation Sans',sans-serif;font-size:11.5px;font-weight:normal;font-style:normal;letter-spacing:0.220px;">5</span>
<span style="position:absolute;white-space:pre;left:353.59px;top:424.62px;line-height:15px;color:#000;font-family:'Liberation Sans',sans-serif;font-size:11.5px;font-weight:normal;font-style:normal;letter-spacing:0.220px;">0</span>
<span style="position:absolute;white-space:pre;left:379.99px;top:424.62px;line-height:15px;color:#000;font-family:'Liberation Sans',sans-serif;font-size:11.5px;font-weight:normal;font-style:normal;letter-spacing:0.220px;">0</span>
<span style="position:absolute;white-space:pre;left:418.39px;top:424.62px;line-height:15px;color:#000;font-family:'Liberation Sans',sans-serif;font-size:11.5px;font-weight:normal;font-style:normal;letter-spacing:0.220px;">5</span>
<span style="position:absolute;white-space:pre;left:447.05px;top:424.62px;line-height:15px;color:#000;font-family:'Liberation Sans',sans-serif;font-size:11.5px;font-weight:normal;font-style:normal;letter-spacing:0.220px;">0,43</span>
<span style="position:absolute;white-space:pre;left:493.59px;top:424.62px;line-height:15px;color:#000;font-family:'Liberation Sans',sans-serif;font-size:11.5px;font-weight:normal;font-style:normal;letter-spacing:0.220px;">0</span>
<span style="position:absolute;white-space:pre;left:524.09px;top:424.62px;line-height:15px;color:#000;font-family:'Liberation Sans',sans-serif;font-size:11.5px;font-weight:normal;font-style:normal;letter-spacing:0.220px;">0</span>
<span style="position:absolute;white-space:pre;left:607.49px;top:424.62px;line-height:15px;color:#000;font-family:'Liberation Sans',sans-serif;font-size:11.5px;font-weight:normal;font-style:normal;letter-spacing:0.220px;">0</span>
<span style="position:absolute;white-space:pre;left:645.09px;top:424.62px;line-height:15px;color:#000;font-family:'Liberation Sans',sans-serif;font-size:11.5px;font-weight:normal;font-style:normal;letter-spacing:0.220px;">0</span>
<span style="position:absolute;white-space:pre;left:689.89px;top:424.62px;line-height:15px;color:#000;font-family:'Liberation Sans',sans-serif;font-size:11.5px;font-weight:normal;font-style:normal;letter-spacing:0.220px;">5</span>
<span style="position:absolute;white-space:pre;left:735.99px;top:424.62px;line-height:15px;color:#000;font-family:'Liberation Sans',sans-serif;font-size:11.5px;font-weight:normal;font-style:normal;letter-spacing:0.220px;">5</span>
<span style="position:absolute;white-space:pre;left:762.59px;top:424.62px;line-height:15px;color:#000;font-family:'Liberation Sans',sans-serif;font-size:11.5px;font-weight:normal;font-style:normal;letter-spacing:0.220px;">0</span>
<span style="position:absolute;white-space:pre;left:807.59px;top:424.62px;line-height:15px;color:#000;font-family:'Liberation Sans',sans-serif;font-size:11.5px;font-weight:normal;font-style:normal;letter-spacing:0.220px;">5</span>
<span style="position:absolute;white-space:pre;left:829.77px;top:424.62px;line-height:15px;color:#000;font-family:'Liberation Sans',sans-serif;font-size:11.5px;font-weight:normal;font-style:normal;word-spacing:-0.4px;letter-spacing:0.220px;">15 100,00</span>
<span style="position:absolute;white-space:pre;left:908.38px;top:424.62px;line-height:15px;color:#000;font-family:'Liberation Sans',sans-serif;font-size:11.5px;font-weight:normal;font-style:normal;word-spacing:-0.4px;letter-spacing:0.220px;">2 200,00</span>
<span style="position:absolute;white-space:pre;left:973.47px;top:424.62px;line-height:15px;color:#000;font-family:'Liberation Sans',sans-serif;font-size:11.5px;font-weight:normal;font-style:normal;word-spacing:-0.4px;letter-spacing:0.220px;">17 300,00</span>
<span style="position:absolute;white-space:pre;left:1044.38px;top:424.62px;line-height:15px;color:#000;font-family:'Liberation Sans',sans-serif;font-size:11.5px;font-weight:normal;font-style:normal;word-spacing:-0.4px;letter-spacing:0.220px;">3 020,00</span>
<span style="position:absolute;white-space:pre;left:200.34px;top:444.72px;line-height:15px;color:#000;font-family:'Liberation Sans',sans-serif;font-size:11.5px;font-weight:normal;font-style:normal;letter-spacing:0.220px;">0+0</span>
<span style="position:absolute;white-space:pre;left:237.45px;top:444.72px;line-height:15px;color:#000;font-family:'Liberation Sans',sans-serif;font-size:11.5px;font-weight:normal;font-style:normal;letter-spacing:0.220px;">= 0</span>
<span style="position:absolute;white-space:pre;left:285.09px;top:444.72px;line-height:15px;color:#000;font-family:'Liberation Sans',sans-serif;font-size:11.5px;font-weight:normal;font-style:normal;letter-spacing:0.220px;">3</span>
<span style="position:absolute;white-space:pre;left:323.19px;top:444.72px;line-height:15px;color:#000;font-family:'Liberation Sans',sans-serif;font-size:11.5px;font-weight:normal;font-style:normal;letter-spacing:0.220px;">4</span>
<span style="position:absolute;white-space:pre;left:353.59px;top:444.72px;line-height:15px;color:#000;font-family:'Liberation Sans',sans-serif;font-size:11.5px;font-weight:normal;font-style:normal;letter-spacing:0.220px;">0</span>
<span style="position:absolute;white-space:pre;left:379.99px;top:444.72px;line-height:15px;color:#000;font-family:'Liberation Sans',sans-serif;font-size:11.5px;font-weight:normal;font-style:normal;letter-spacing:0.220px;">0</span>
<span style="position:absolute;white-space:pre;left:418.39px;top:444.72px;line-height:15px;color:#000;font-family:'Liberation Sans',sans-serif;font-size:11.5px;font-weight:normal;font-style:normal;letter-spacing:0.220px;">3</span>
<span style="position:absolute;white-space:pre;left:447.05px;top:444.72px;line-height:15px;color:#000;font-family:'Liberation Sans',sans-serif;font-size:11.5px;font-weight:normal;font-style:normal;letter-spacing:0.220px;">0,26</span>
<span style="position:absolute;white-space:pre;left:493.59px;top:444.72px;line-height:15px;color:#000;font-family:'Liberation Sans',sans-serif;font-size:11.5px;font-weight:normal;font-style:normal;letter-spacing:0.220px;">0</span>
<span style="position:absolute;white-space:pre;left:524.09px;top:444.72px;line-height:15px;color:#000;font-family:'Liberation Sans',sans-serif;font-size:11.5px;font-weight:normal;font-style:normal;letter-spacing:0.220px;">0</span>
<span style="position:absolute;white-space:pre;left:607.49px;top:444.72px;line-height:15px;color:#000;font-family:'Liberation Sans',sans-serif;font-size:11.5px;font-weight:normal;font-style:normal;letter-spacing:0.220px;">0</span>
<span style="position:absolute;white-space:pre;left:645.09px;top:444.72px;line-height:15px;color:#000;font-family:'Liberation Sans',sans-serif;font-size:11.5px;font-weight:normal;font-style:normal;letter-spacing:0.220px;">0</span>
<span style="position:absolute;white-space:pre;left:689.89px;top:444.72px;line-height:15px;color:#000;font-family:'Liberation Sans',sans-serif;font-size:11.5px;font-weight:normal;font-style:normal;letter-spacing:0.220px;">3</span>
<span style="position:absolute;white-space:pre;left:735.99px;top:444.72px;line-height:15px;color:#000;font-family:'Liberation Sans',sans-serif;font-size:11.5px;font-weight:normal;font-style:normal;letter-spacing:0.220px;">4</span>
<span style="position:absolute;white-space:pre;left:762.59px;top:444.72px;line-height:15px;color:#000;font-family:'Liberation Sans',sans-serif;font-size:11.5px;font-weight:normal;font-style:normal;letter-spacing:0.220px;">0</span>
<span style="position:absolute;white-space:pre;left:807.59px;top:444.72px;line-height:15px;color:#000;font-family:'Liberation Sans',sans-serif;font-size:11.5px;font-weight:normal;font-style:normal;letter-spacing:0.220px;">3</span>
<span style="position:absolute;white-space:pre;left:829.77px;top:444.72px;line-height:15px;color:#000;font-family:'Liberation Sans',sans-serif;font-size:11.5px;font-weight:normal;font-style:normal;word-spacing:-0.4px;letter-spacing:0.220px;">10 400,00</span>
<span style="position:absolute;white-space:pre;left:908.38px;top:444.72px;line-height:15px;color:#000;font-family:'Liberation Sans',sans-serif;font-size:11.5px;font-weight:normal;font-style:normal;word-spacing:-0.4px;letter-spacing:0.220px;">1 500,00</span>
<span style="position:absolute;white-space:pre;left:974.32px;top:444.72px;line-height:15px;color:#000;font-family:'Liberation Sans',sans-serif;font-size:11.5px;font-weight:normal;font-style:normal;word-spacing:-0.4px;letter-spacing:0.220px;">11 900,00</span>
<span style="position:absolute;white-space:pre;left:1044.38px;top:444.72px;line-height:15px;color:#000;font-family:'Liberation Sans',sans-serif;font-size:11.5px;font-weight:normal;font-style:normal;word-spacing:-0.4px;letter-spacing:0.220px;">3 466,67</span>
<span style="position:absolute;white-space:pre;left:59.10px;top:468.11px;line-height:14px;color:#000;font-family:'Liberation Sans',sans-serif;font-size:10.5px;font-weight:normal;font-style:normal;">М</span>
<span style="position:absolute;white-space:pre;left:200.34px;top:467.72px;line-height:15px;color:#000;font-family:'Liberation Sans',sans-serif;font-size:11.5px;font-weight:normal;font-style:normal;letter-spacing:0.220px;">0+0</span>
<span style="position:absolute;white-space:pre;left:237.45px;top:467.72px;line-height:15px;color:#000;font-family:'Liberation Sans',sans-serif;font-size:11.5px;font-weight:normal;font-style:normal;letter-spacing:0.220px;">= 0</span>
<span style="position:absolute;white-space:pre;left:285.09px;top:467.72px;line-height:15px;color:#000;font-family:'Liberation Sans',sans-serif;font-size:11.5px;font-weight:normal;font-style:normal;letter-spacing:0.220px;">0</span>
<span style="position:absolute;white-space:pre;left:323.19px;top:467.72px;line-height:15px;color:#000;font-family:'Liberation Sans',sans-serif;font-size:11.5px;font-weight:normal;font-style:normal;letter-spacing:0.220px;">1</span>
<span style="position:absolute;white-space:pre;left:353.59px;top:467.72px;line-height:15px;color:#000;font-family:'Liberation Sans',sans-serif;font-size:11.5px;font-weight:normal;font-style:normal;letter-spacing:0.220px;">0</span>
<span style="position:absolute;white-space:pre;left:379.99px;top:467.72px;line-height:15px;color:#000;font-family:'Liberation Sans',sans-serif;font-size:11.5px;font-weight:normal;font-style:normal;letter-spacing:0.220px;">0</span>
<span style="position:absolute;white-space:pre;left:418.39px;top:467.72px;line-height:15px;color:#000;font-family:'Liberation Sans',sans-serif;font-size:11.5px;font-weight:normal;font-style:normal;letter-spacing:0.220px;">0</span>
<span style="position:absolute;white-space:pre;left:447.05px;top:467.72px;line-height:15px;color:#000;font-family:'Liberation Sans',sans-serif;font-size:11.5px;font-weight:normal;font-style:normal;letter-spacing:0.220px;">0,00</span>
<span style="position:absolute;white-space:pre;left:493.59px;top:467.72px;line-height:15px;color:#000;font-family:'Liberation Sans',sans-serif;font-size:11.5px;font-weight:normal;font-style:normal;letter-spacing:0.220px;">0</span>
<span style="position:absolute;white-space:pre;left:524.09px;top:467.72px;line-height:15px;color:#000;font-family:'Liberation Sans',sans-serif;font-size:11.5px;font-weight:normal;font-style:normal;letter-spacing:0.220px;">0</span>
<span style="position:absolute;white-space:pre;left:607.49px;top:467.72px;line-height:15px;color:#000;font-family:'Liberation Sans',sans-serif;font-size:11.5px;font-weight:normal;font-style:normal;letter-spacing:0.220px;">0</span>
<span style="position:absolute;white-space:pre;left:645.09px;top:467.72px;line-height:15px;color:#000;font-family:'Liberation Sans',sans-serif;font-size:11.5px;font-weight:normal;font-style:normal;letter-spacing:0.220px;">0</span>
<span style="position:absolute;white-space:pre;left:689.89px;top:467.72px;line-height:15px;color:#000;font-family:'Liberation Sans',sans-serif;font-size:11.5px;font-weight:normal;font-style:normal;letter-spacing:0.220px;">0</span>
<span style="position:absolute;white-space:pre;left:735.99px;top:467.72px;line-height:15px;color:#000;font-family:'Liberation Sans',sans-serif;font-size:11.5px;font-weight:normal;font-style:normal;letter-spacing:0.220px;">1</span>
<span style="position:absolute;white-space:pre;left:762.59px;top:467.72px;line-height:15px;color:#000;font-family:'Liberation Sans',sans-serif;font-size:11.5px;font-weight:normal;font-style:normal;letter-spacing:0.220px;">0</span>
<span style="position:absolute;white-space:pre;left:807.59px;top:467.72px;line-height:15px;color:#000;font-family:'Liberation Sans',sans-serif;font-size:11.5px;font-weight:normal;font-style:normal;letter-spacing:0.220px;">0</span>
<span style="position:absolute;white-space:pre;left:859.25px;top:467.72px;line-height:15px;color:#000;font-family:'Liberation Sans',sans-serif;font-size:11.5px;font-weight:normal;font-style:normal;letter-spacing:0.220px;">0,00</span>
<span style="position:absolute;white-space:pre;left:918.01px;top:467.72px;line-height:15px;color:#000;font-family:'Liberation Sans',sans-serif;font-size:11.5px;font-weight:normal;font-style:normal;letter-spacing:0.220px;">100,00</span>
<span style="position:absolute;white-space:pre;left:989.71px;top:467.72px;line-height:15px;color:#000;font-family:'Liberation Sans',sans-serif;font-size:11.5px;font-weight:normal;font-style:normal;letter-spacing:0.220px;">100,00</span>
<span style="position:absolute;white-space:pre;left:1067.25px;top:467.72px;line-height:15px;color:#000;font-family:'Liberation Sans',sans-serif;font-size:11.5px;font-weight:normal;font-style:normal;letter-spacing:0.220px;">0,00</span>
<span style="position:absolute;white-space:pre;left:59.10px;top:490.91px;line-height:14px;color:#000;font-family:'Liberation Sans',sans-serif;font-size:10.5px;font-weight:normal;font-style:normal;letter-spacing:0.384px;">СИБ</span>
<span style="position:absolute;white-space:pre;left:200.34px;top:490.52px;line-height:15px;color:#000;font-family:'Liberation Sans',sans-serif;font-size:11.5px;font-weight:normal;font-style:normal;letter-spacing:0.220px;">0+0</span>
<span style="position:absolute;white-space:pre;left:237.45px;top:490.52px;line-height:15px;color:#000;font-family:'Liberation Sans',sans-serif;font-size:11.5px;font-weight:normal;font-style:normal;letter-spacing:0.220px;">= 0</span>
<span style="position:absolute;white-space:pre;left:285.09px;top:490.52px;line-height:15px;color:#000;font-family:'Liberation Sans',sans-serif;font-size:11.5px;font-weight:normal;font-style:normal;letter-spacing:0.220px;">1</span>
<span style="position:absolute;white-space:pre;left:323.19px;top:490.52px;line-height:15px;color:#000;font-family:'Liberation Sans',sans-serif;font-size:11.5px;font-weight:normal;font-style:normal;letter-spacing:0.220px;">0</span>
<span style="position:absolute;white-space:pre;left:353.59px;top:490.52px;line-height:15px;color:#000;font-family:'Liberation Sans',sans-serif;font-size:11.5px;font-weight:normal;font-style:normal;letter-spacing:0.220px;">0</span>
<span style="position:absolute;white-space:pre;left:379.99px;top:490.52px;line-height:15px;color:#000;font-family:'Liberation Sans',sans-serif;font-size:11.5px;font-weight:normal;font-style:normal;letter-spacing:0.220px;">0</span>
<span style="position:absolute;white-space:pre;left:418.39px;top:490.52px;line-height:15px;color:#000;font-family:'Liberation Sans',sans-serif;font-size:11.5px;font-weight:normal;font-style:normal;letter-spacing:0.220px;">1</span>
<span style="position:absolute;white-space:pre;left:447.05px;top:490.52px;line-height:15px;color:#000;font-family:'Liberation Sans',sans-serif;font-size:11.5px;font-weight:normal;font-style:normal;letter-spacing:0.220px;">0,09</span>
<span style="position:absolute;white-space:pre;left:493.59px;top:490.52px;line-height:15px;color:#000;font-family:'Liberation Sans',sans-serif;font-size:11.5px;font-weight:normal;font-style:normal;letter-spacing:0.220px;">0</span>
<span style="position:absolute;white-space:pre;left:524.09px;top:490.52px;line-height:15px;color:#000;font-family:'Liberation Sans',sans-serif;font-size:11.5px;font-weight:normal;font-style:normal;letter-spacing:0.220px;">0</span>
<span style="position:absolute;white-space:pre;left:607.49px;top:490.52px;line-height:15px;color:#000;font-family:'Liberation Sans',sans-serif;font-size:11.5px;font-weight:normal;font-style:normal;letter-spacing:0.220px;">0</span>
<span style="position:absolute;white-space:pre;left:645.09px;top:490.52px;line-height:15px;color:#000;font-family:'Liberation Sans',sans-serif;font-size:11.5px;font-weight:normal;font-style:normal;letter-spacing:0.220px;">0</span>
<span style="position:absolute;white-space:pre;left:689.89px;top:490.52px;line-height:15px;color:#000;font-family:'Liberation Sans',sans-serif;font-size:11.5px;font-weight:normal;font-style:normal;letter-spacing:0.220px;">1</span>
<span style="position:absolute;white-space:pre;left:735.99px;top:490.52px;line-height:15px;color:#000;font-family:'Liberation Sans',sans-serif;font-size:11.5px;font-weight:normal;font-style:normal;letter-spacing:0.220px;">0</span>
<span style="position:absolute;white-space:pre;left:762.59px;top:490.52px;line-height:15px;color:#000;font-family:'Liberation Sans',sans-serif;font-size:11.5px;font-weight:normal;font-style:normal;letter-spacing:0.220px;">0</span>
<span style="position:absolute;white-space:pre;left:807.59px;top:490.52px;line-height:15px;color:#000;font-family:'Liberation Sans',sans-serif;font-size:11.5px;font-weight:normal;font-style:normal;letter-spacing:0.220px;">1</span>
<span style="position:absolute;white-space:pre;left:836.38px;top:490.52px;line-height:15px;color:#000;font-family:'Liberation Sans',sans-serif;font-size:11.5px;font-weight:normal;font-style:normal;word-spacing:-0.4px;letter-spacing:0.220px;">2 200,00</span>
<span style="position:absolute;white-space:pre;left:918.01px;top:490.52px;line-height:15px;color:#000;font-family:'Liberation Sans',sans-serif;font-size:11.5px;font-weight:normal;font-style:normal;letter-spacing:0.220px;">600,00</span>
<span style="position:absolute;white-space:pre;left:980.09px;top:490.52px;line-height:15px;color:#000;font-family:'Liberation Sans',sans-serif;font-size:11.5px;font-weight:normal;font-style:normal;word-spacing:-0.4px;letter-spacing:0.220px;">2 800,00</span>
<span style="position:absolute;white-space:pre;left:1044.38px;top:490.52px;line-height:15px;color:#000;font-family:'Liberation Sans',sans-serif;font-size:11.5px;font-weight:normal;font-style:normal;word-spacing:-0.4px;letter-spacing:0.220px;">2 200,00</span>
<span style="position:absolute;white-space:pre;left:59.10px;top:513.91px;line-height:14px;color:#000;font-family:'Liberation Sans',sans-serif;font-size:10.5px;font-weight:normal;font-style:normal;letter-spacing:0.005px;">ЦЕНТР</span>
<span style="position:absolute;white-space:pre;left:200.34px;top:513.52px;line-height:15px;color:#000;font-family:'Liberation Sans',sans-serif;font-size:11.5px;font-weight:normal;font-style:normal;letter-spacing:0.220px;">0+0</span>
<span style="position:absolute;white-space:pre;left:237.45px;top:513.52px;line-height:15px;color:#000;font-family:'Liberation Sans',sans-serif;font-size:11.5px;font-weight:normal;font-style:normal;letter-spacing:0.220px;">= 0</span>
<span style="position:absolute;white-space:pre;left:285.09px;top:513.52px;line-height:15px;color:#000;font-family:'Liberation Sans',sans-serif;font-size:11.5px;font-weight:normal;font-style:normal;letter-spacing:0.220px;">1</span>
<span style="position:absolute;white-space:pre;left:323.19px;top:513.52px;line-height:15px;color:#000;font-family:'Liberation Sans',sans-serif;font-size:11.5px;font-weight:normal;font-style:normal;letter-spacing:0.220px;">0</span>
<span style="position:absolute;white-space:pre;left:353.59px;top:513.52px;line-height:15px;color:#000;font-family:'Liberation Sans',sans-serif;font-size:11.5px;font-weight:normal;font-style:normal;letter-spacing:0.220px;">0</span>
<span style="position:absolute;white-space:pre;left:379.99px;top:513.52px;line-height:15px;color:#000;font-family:'Liberation Sans',sans-serif;font-size:11.5px;font-weight:normal;font-style:normal;letter-spacing:0.220px;">0</span>
<span style="position:absolute;white-space:pre;left:418.39px;top:513.52px;line-height:15px;color:#000;font-family:'Liberation Sans',sans-serif;font-size:11.5px;font-weight:normal;font-style:normal;letter-spacing:0.220px;">1</span>
<span style="position:absolute;white-space:pre;left:447.05px;top:513.52px;line-height:15px;color:#000;font-family:'Liberation Sans',sans-serif;font-size:11.5px;font-weight:normal;font-style:normal;letter-spacing:0.220px;">0,09</span>
<span style="position:absolute;white-space:pre;left:493.59px;top:513.52px;line-height:15px;color:#000;font-family:'Liberation Sans',sans-serif;font-size:11.5px;font-weight:normal;font-style:normal;letter-spacing:0.220px;">0</span>
<span style="position:absolute;white-space:pre;left:524.09px;top:513.52px;line-height:15px;color:#000;font-family:'Liberation Sans',sans-serif;font-size:11.5px;font-weight:normal;font-style:normal;letter-spacing:0.220px;">0</span>
<span style="position:absolute;white-space:pre;left:607.49px;top:513.52px;line-height:15px;color:#000;font-family:'Liberation Sans',sans-serif;font-size:11.5px;font-weight:normal;font-style:normal;letter-spacing:0.220px;">0</span>
<span style="position:absolute;white-space:pre;left:645.09px;top:513.52px;line-height:15px;color:#000;font-family:'Liberation Sans',sans-serif;font-size:11.5px;font-weight:normal;font-style:normal;letter-spacing:0.220px;">0</span>
<span style="position:absolute;white-space:pre;left:689.89px;top:513.52px;line-height:15px;color:#000;font-family:'Liberation Sans',sans-serif;font-size:11.5px;font-weight:normal;font-style:normal;letter-spacing:0.220px;">1</span>
<span style="position:absolute;white-space:pre;left:735.99px;top:513.52px;line-height:15px;color:#000;font-family:'Liberation Sans',sans-serif;font-size:11.5px;font-weight:normal;font-style:normal;letter-spacing:0.220px;">0</span>
<span style="position:absolute;white-space:pre;left:762.59px;top:513.52px;line-height:15px;color:#000;font-family:'Liberation Sans',sans-serif;font-size:11.5px;font-weight:normal;font-style:normal;letter-spacing:0.220px;">0</span>
<span style="position:absolute;white-space:pre;left:807.59px;top:513.52px;line-height:15px;color:#000;font-family:'Liberation Sans',sans-serif;font-size:11.5px;font-weight:normal;font-style:normal;letter-spacing:0.220px;">1</span>
<span style="position:absolute;white-space:pre;left:836.38px;top:513.52px;line-height:15px;color:#000;font-family:'Liberation Sans',sans-serif;font-size:11.5px;font-weight:normal;font-style:normal;word-spacing:-0.4px;letter-spacing:0.220px;">2 500,00</span>
<span style="position:absolute;white-space:pre;left:931.25px;top:513.52px;line-height:15px;color:#000;font-family:'Liberation Sans',sans-serif;font-size:11.5px;font-weight:normal;font-style:normal;letter-spacing:0.220px;">0,00</span>
<span style="position:absolute;white-space:pre;left:980.09px;top:513.52px;line-height:15px;color:#000;font-family:'Liberation Sans',sans-serif;font-size:11.5px;font-weight:normal;font-style:normal;word-spacing:-0.4px;letter-spacing:0.220px;">2 500,00</span>
<span style="position:absolute;white-space:pre;left:1044.38px;top:513.52px;line-height:15px;color:#000;font-family:'Liberation Sans',sans-serif;font-size:11.5px;font-weight:normal;font-style:normal;word-spacing:-0.4px;letter-spacing:0.220px;">2 500,00</span>
<span style="position:absolute;white-space:pre;left:47.90px;top:533.91px;line-height:14px;color:#000;font-family:'Liberation Sans',sans-serif;font-size:10.5px;font-weight:normal;font-style:normal;letter-spacing:-0.255px;">BASEDAY</span>
<span style="position:absolute;white-space:pre;left:200.34px;top:533.52px;line-height:15px;color:#000;font-family:'Liberation Sans',sans-serif;font-size:11.5px;font-weight:normal;font-style:normal;letter-spacing:0.220px;">0+0</span>
<span style="position:absolute;white-space:pre;left:237.45px;top:533.52px;line-height:15px;color:#000;font-family:'Liberation Sans',sans-serif;font-size:11.5px;font-weight:normal;font-style:normal;letter-spacing:0.220px;">= 0</span>
<span style="position:absolute;white-space:pre;left:285.09px;top:533.52px;line-height:15px;color:#000;font-family:'Liberation Sans',sans-serif;font-size:11.5px;font-weight:normal;font-style:normal;letter-spacing:0.220px;">0</span>
<span style="position:absolute;white-space:pre;left:323.19px;top:533.52px;line-height:15px;color:#000;font-family:'Liberation Sans',sans-serif;font-size:11.5px;font-weight:normal;font-style:normal;letter-spacing:0.220px;">0</span>
<span style="position:absolute;white-space:pre;left:353.59px;top:533.52px;line-height:15px;color:#000;font-family:'Liberation Sans',sans-serif;font-size:11.5px;font-weight:normal;font-style:normal;letter-spacing:0.220px;">0</span>
<span style="position:absolute;white-space:pre;left:379.99px;top:533.52px;line-height:15px;color:#000;font-family:'Liberation Sans',sans-serif;font-size:11.5px;font-weight:normal;font-style:normal;letter-spacing:0.220px;">0</span>
<span style="position:absolute;white-space:pre;left:418.39px;top:533.52px;line-height:15px;color:#000;font-family:'Liberation Sans',sans-serif;font-size:11.5px;font-weight:normal;font-style:normal;letter-spacing:0.220px;">0</span>
<span style="position:absolute;white-space:pre;left:447.05px;top:533.52px;line-height:15px;color:#000;font-family:'Liberation Sans',sans-serif;font-size:11.5px;font-weight:normal;font-style:normal;letter-spacing:0.220px;">0,00</span>
<span style="position:absolute;white-space:pre;left:493.59px;top:533.52px;line-height:15px;color:#000;font-family:'Liberation Sans',sans-serif;font-size:11.5px;font-weight:normal;font-style:normal;letter-spacing:0.220px;">0</span>
<span style="position:absolute;white-space:pre;left:524.09px;top:533.52px;line-height:15px;color:#000;font-family:'Liberation Sans',sans-serif;font-size:11.5px;font-weight:normal;font-style:normal;letter-spacing:0.220px;">0</span>
<span style="position:absolute;white-space:pre;left:607.49px;top:533.52px;line-height:15px;color:#000;font-family:'Liberation Sans',sans-serif;font-size:11.5px;font-weight:normal;font-style:normal;letter-spacing:0.220px;">0</span>
<span style="position:absolute;white-space:pre;left:645.09px;top:533.52px;line-height:15px;color:#000;font-family:'Liberation Sans',sans-serif;font-size:11.5px;font-weight:normal;font-style:normal;letter-spacing:0.220px;">0</span>
<span style="position:absolute;white-space:pre;left:689.89px;top:533.52px;line-height:15px;color:#000;font-family:'Liberation Sans',sans-serif;font-size:11.5px;font-weight:normal;font-style:normal;letter-spacing:0.220px;">0</span>
<span style="position:absolute;white-space:pre;left:735.99px;top:533.52px;line-height:15px;color:#000;font-family:'Liberation Sans',sans-serif;font-size:11.5px;font-weight:normal;font-style:normal;letter-spacing:0.220px;">0</span>
<span style="position:absolute;white-space:pre;left:762.59px;top:533.52px;line-height:15px;color:#000;font-family:'Liberation Sans',sans-serif;font-size:11.5px;font-weight:normal;font-style:normal;letter-spacing:0.220px;">0</span>
<span style="position:absolute;white-space:pre;left:807.59px;top:533.52px;line-height:15px;color:#000;font-family:'Liberation Sans',sans-serif;font-size:11.5px;font-weight:normal;font-style:normal;letter-spacing:0.220px;">0</span>
<span style="position:absolute;white-space:pre;left:859.25px;top:533.52px;line-height:15px;color:#000;font-family:'Liberation Sans',sans-serif;font-size:11.5px;font-weight:normal;font-style:normal;letter-spacing:0.220px;">0,00</span>
<span style="position:absolute;white-space:pre;left:931.25px;top:533.52px;line-height:15px;color:#000;font-family:'Liberation Sans',sans-serif;font-size:11.5px;font-weight:normal;font-style:normal;letter-spacing:0.220px;">0,00</span>
<span style="position:absolute;white-space:pre;left:1002.95px;top:533.52px;line-height:15px;color:#000;font-family:'Liberation Sans',sans-serif;font-size:11.5px;font-weight:normal;font-style:normal;letter-spacing:0.220px;">0,00</span>
<span style="position:absolute;white-space:pre;left:1067.25px;top:533.52px;line-height:15px;color:#000;font-family:'Liberation Sans',sans-serif;font-size:11.5px;font-weight:normal;font-style:normal;letter-spacing:0.220px;">0,00</span>
<span style="position:absolute;white-space:pre;left:200.34px;top:554.52px;line-height:15px;color:#000;font-family:'Liberation Sans',sans-serif;font-size:11.5px;font-weight:normal;font-style:normal;letter-spacing:0.220px;">0+0</span>
<span style="position:absolute;white-space:pre;left:237.45px;top:554.52px;line-height:15px;color:#000;font-family:'Liberation Sans',sans-serif;font-size:11.5px;font-weight:normal;font-style:normal;letter-spacing:0.220px;">= 0</span>
<span style="position:absolute;white-space:pre;left:285.09px;top:554.52px;line-height:15px;color:#000;font-family:'Liberation Sans',sans-serif;font-size:11.5px;font-weight:normal;font-style:normal;letter-spacing:0.220px;">0</span>
<span style="position:absolute;white-space:pre;left:323.19px;top:554.52px;line-height:15px;color:#000;font-family:'Liberation Sans',sans-serif;font-size:11.5px;font-weight:normal;font-style:normal;letter-spacing:0.220px;">0</span>
<span style="position:absolute;white-space:pre;left:353.59px;top:554.52px;line-height:15px;color:#000;font-family:'Liberation Sans',sans-serif;font-size:11.5px;font-weight:normal;font-style:normal;letter-spacing:0.220px;">0</span>
<span style="position:absolute;white-space:pre;left:379.99px;top:554.52px;line-height:15px;color:#000;font-family:'Liberation Sans',sans-serif;font-size:11.5px;font-weight:normal;font-style:normal;letter-spacing:0.220px;">0</span>
<span style="position:absolute;white-space:pre;left:418.39px;top:554.52px;line-height:15px;color:#000;font-family:'Liberation Sans',sans-serif;font-size:11.5px;font-weight:normal;font-style:normal;letter-spacing:0.220px;">0</span>
<span style="position:absolute;white-space:pre;left:447.05px;top:554.52px;line-height:15px;color:#000;font-family:'Liberation Sans',sans-serif;font-size:11.5px;font-weight:normal;font-style:normal;letter-spacing:0.220px;">0,00</span>
<span style="position:absolute;white-space:pre;left:493.59px;top:554.52px;line-height:15px;color:#000;font-family:'Liberation Sans',sans-serif;font-size:11.5px;font-weight:normal;font-style:normal;letter-spacing:0.220px;">0</span>
<span style="position:absolute;white-space:pre;left:524.09px;top:554.52px;line-height:15px;color:#000;font-family:'Liberation Sans',sans-serif;font-size:11.5px;font-weight:normal;font-style:normal;letter-spacing:0.220px;">0</span>
<span style="position:absolute;white-space:pre;left:607.49px;top:554.52px;line-height:15px;color:#000;font-family:'Liberation Sans',sans-serif;font-size:11.5px;font-weight:normal;font-style:normal;letter-spacing:0.220px;">0</span>
<span style="position:absolute;white-space:pre;left:645.09px;top:554.52px;line-height:15px;color:#000;font-family:'Liberation Sans',sans-serif;font-size:11.5px;font-weight:normal;font-style:normal;letter-spacing:0.220px;">0</span>
<span style="position:absolute;white-space:pre;left:689.89px;top:554.52px;line-height:15px;color:#000;font-family:'Liberation Sans',sans-serif;font-size:11.5px;font-weight:normal;font-style:normal;letter-spacing:0.220px;">0</span>
<span style="position:absolute;white-space:pre;left:735.99px;top:554.52px;line-height:15px;color:#000;font-family:'Liberation Sans',sans-serif;font-size:11.5px;font-weight:normal;font-style:normal;letter-spacing:0.220px;">0</span>
<span style="position:absolute;white-space:pre;left:762.59px;top:554.52px;line-height:15px;color:#000;font-family:'Liberation Sans',sans-serif;font-size:11.5px;font-weight:normal;font-style:normal;letter-spacing:0.220px;">0</span>
<span style="position:absolute;white-space:pre;left:807.59px;top:554.52px;line-height:15px;color:#000;font-family:'Liberation Sans',sans-serif;font-size:11.5px;font-weight:normal;font-style:normal;letter-spacing:0.220px;">0</span>
<span style="position:absolute;white-space:pre;left:859.25px;top:554.52px;line-height:15px;color:#000;font-family:'Liberation Sans',sans-serif;font-size:11.5px;font-weight:normal;font-style:normal;letter-spacing:0.220px;">0,00</span>
<span style="position:absolute;white-space:pre;left:931.25px;top:554.52px;line-height:15px;color:#000;font-family:'Liberation Sans',sans-serif;font-size:11.5px;font-weight:normal;font-style:normal;letter-spacing:0.220px;">0,00</span>
<span style="position:absolute;white-space:pre;left:1002.95px;top:554.52px;line-height:15px;color:#000;font-family:'Liberation Sans',sans-serif;font-size:11.5px;font-weight:normal;font-style:normal;letter-spacing:0.220px;">0,00</span>
<span style="position:absolute;white-space:pre;left:1067.25px;top:554.52px;line-height:15px;color:#000;font-family:'Liberation Sans',sans-serif;font-size:11.5px;font-weight:normal;font-style:normal;letter-spacing:0.220px;">0,00</span>
<span style="position:absolute;white-space:pre;left:200.34px;top:575.52px;line-height:15px;color:#000;font-family:'Liberation Sans',sans-serif;font-size:11.5px;font-weight:normal;font-style:normal;letter-spacing:0.220px;">0+0</span>
<span style="position:absolute;white-space:pre;left:237.45px;top:575.52px;line-height:15px;color:#000;font-family:'Liberation Sans',sans-serif;font-size:11.5px;font-weight:normal;font-style:normal;letter-spacing:0.220px;">= 0</span>
<span style="position:absolute;white-space:pre;left:285.09px;top:575.52px;line-height:15px;color:#000;font-family:'Liberation Sans',sans-serif;font-size:11.5px;font-weight:normal;font-style:normal;letter-spacing:0.220px;">5</span>
<span style="position:absolute;white-space:pre;left:323.19px;top:575.52px;line-height:15px;color:#000;font-family:'Liberation Sans',sans-serif;font-size:11.5px;font-weight:normal;font-style:normal;letter-spacing:0.220px;">5</span>
<span style="position:absolute;white-space:pre;left:353.59px;top:575.52px;line-height:15px;color:#000;font-family:'Liberation Sans',sans-serif;font-size:11.5px;font-weight:normal;font-style:normal;letter-spacing:0.220px;">0</span>
<span style="position:absolute;white-space:pre;left:379.99px;top:575.52px;line-height:15px;color:#000;font-family:'Liberation Sans',sans-serif;font-size:11.5px;font-weight:normal;font-style:normal;letter-spacing:0.220px;">0</span>
<span style="position:absolute;white-space:pre;left:418.39px;top:575.52px;line-height:15px;color:#000;font-family:'Liberation Sans',sans-serif;font-size:11.5px;font-weight:normal;font-style:normal;letter-spacing:0.220px;">5</span>
<span style="position:absolute;white-space:pre;left:447.05px;top:575.52px;line-height:15px;color:#000;font-family:'Liberation Sans',sans-serif;font-size:11.5px;font-weight:normal;font-style:normal;letter-spacing:0.220px;">0,43</span>
<span style="position:absolute;white-space:pre;left:493.59px;top:575.52px;line-height:15px;color:#000;font-family:'Liberation Sans',sans-serif;font-size:11.5px;font-weight:normal;font-style:normal;letter-spacing:0.220px;">0</span>
<span style="position:absolute;white-space:pre;left:524.09px;top:575.52px;line-height:15px;color:#000;font-family:'Liberation Sans',sans-serif;font-size:11.5px;font-weight:normal;font-style:normal;letter-spacing:0.220px;">0</span>
<span style="position:absolute;white-space:pre;left:547.64px;top:575.52px;line-height:15px;color:#000;font-family:'Liberation Sans',sans-serif;font-size:11.5px;font-weight:normal;font-style:normal;letter-spacing:0.220px;">1 145</span>
<span style="position:absolute;white-space:pre;left:607.49px;top:575.52px;line-height:15px;color:#000;font-family:'Liberation Sans',sans-serif;font-size:11.5px;font-weight:normal;font-style:normal;letter-spacing:0.220px;">0</span>
<span style="position:absolute;white-space:pre;left:645.09px;top:575.52px;line-height:15px;color:#000;font-family:'Liberation Sans',sans-serif;font-size:11.5px;font-weight:normal;font-style:normal;letter-spacing:0.220px;">0</span>
<span style="position:absolute;white-space:pre;left:689.89px;top:575.52px;line-height:15px;color:#000;font-family:'Liberation Sans',sans-serif;font-size:11.5px;font-weight:normal;font-style:normal;letter-spacing:0.220px;">5</span>
<span style="position:absolute;white-space:pre;left:735.99px;top:575.52px;line-height:15px;color:#000;font-family:'Liberation Sans',sans-serif;font-size:11.5px;font-weight:normal;font-style:normal;letter-spacing:0.220px;">5</span>
<span style="position:absolute;white-space:pre;left:762.59px;top:575.52px;line-height:15px;color:#000;font-family:'Liberation Sans',sans-serif;font-size:11.5px;font-weight:normal;font-style:normal;letter-spacing:0.220px;">0</span>
<span style="position:absolute;white-space:pre;left:807.59px;top:575.52px;line-height:15px;color:#000;font-family:'Liberation Sans',sans-serif;font-size:11.5px;font-weight:normal;font-style:normal;letter-spacing:0.220px;">5</span>
<span style="position:absolute;white-space:pre;left:829.77px;top:575.52px;line-height:15px;color:#000;font-family:'Liberation Sans',sans-serif;font-size:11.5px;font-weight:normal;font-style:normal;word-spacing:-0.4px;letter-spacing:0.220px;">15 100,00</span>
<span style="position:absolute;white-space:pre;left:908.38px;top:575.52px;line-height:15px;color:#000;font-family:'Liberation Sans',sans-serif;font-size:11.5px;font-weight:normal;font-style:normal;word-spacing:-0.4px;letter-spacing:0.220px;">2 200,00</span>
<span style="position:absolute;white-space:pre;left:973.47px;top:575.52px;line-height:15px;color:#000;font-family:'Liberation Sans',sans-serif;font-size:11.5px;font-weight:normal;font-style:normal;word-spacing:-0.4px;letter-spacing:0.220px;">17 300,00</span>
<span style="position:absolute;white-space:pre;left:1044.38px;top:575.52px;line-height:15px;color:#000;font-family:'Liberation Sans',sans-serif;font-size:11.5px;font-weight:normal;font-style:normal;word-spacing:-0.4px;letter-spacing:0.220px;">3 020,00</span>
<span style="position:absolute;white-space:pre;left:149.84px;top:575.52px;line-height:15px;color:#000;font-family:'Liberation Sans',sans-serif;font-size:11.5px;font-weight:normal;font-style:normal;letter-spacing:0.220px;">1 150</span>
</body></html>
